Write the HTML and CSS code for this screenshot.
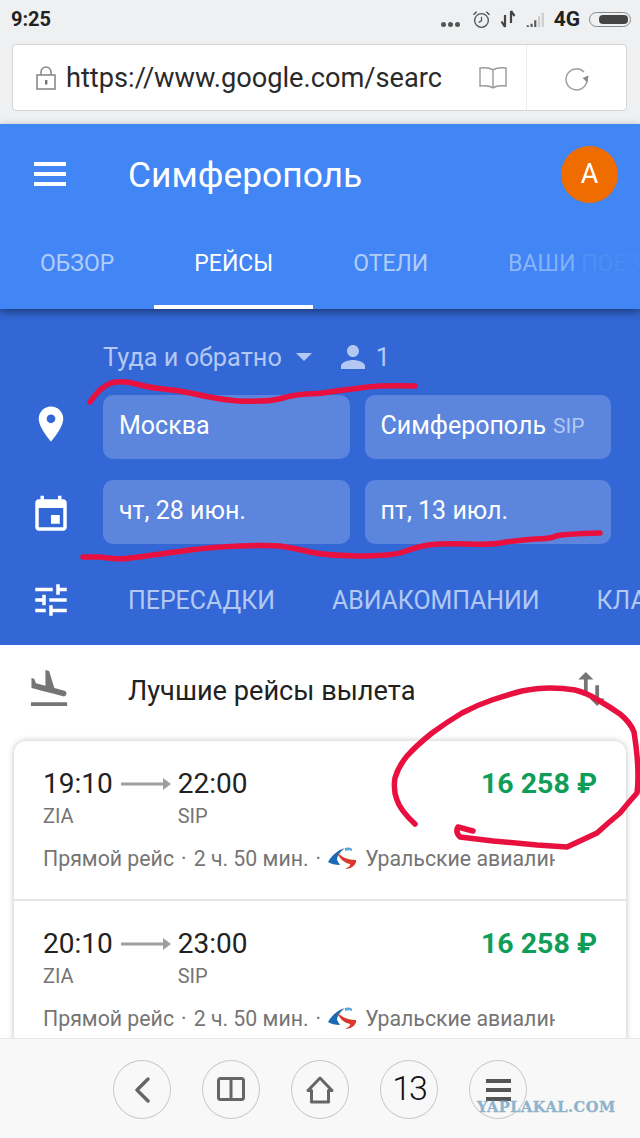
FILE: index.html
```html
<!DOCTYPE html>
<html lang="ru">
<head>
  <meta charset="UTF-8" />
  <meta name="viewport" content="width=device-width, initial-scale=1.0"/>
  <title>Симферополь</title>
  <link rel="stylesheet" href="styles.css">
</head>
<body>
  <div class="status-bar">
    <span class="clock">9:25</span>
    <div class="status-icons">
      <span class="status-dots"><i></i><i></i><i></i></span>
      <svg class="alarm-icon" viewBox="0 0 20 20" width="19" height="19"><circle cx="10" cy="11" r="7.200" fill="none" stroke="#555" stroke-width="1.400"/><path d="M10 7v4.400l-3 1.600" fill="none" stroke="#555" stroke-width="1.300"/><path d="M1.500 5L5 1.800M18.500 5L15 1.800" stroke="#555" stroke-width="1.600"/></svg>
      <svg class="data-icon" viewBox="0 0 16 20" width="16" height="20"><path d="M5 18V6M1.500 12.500L5 18M11 2v12M11 2l3.500 5" fill="none" stroke="#444" stroke-width="2.200"/></svg>
      <svg class="signal-icon" viewBox="0 0 21 18" width="21" height="15"><path d="M0 16h2.500v2H0zM4.500 14H7v4H4.500zM9 10h2.500v8H9z" fill="#555"/><path d="M13.500 5H16v13h-2.500zM18 1h2.500v17H18z" fill="#ccc"/></svg>
      <span class="net-label">4G</span>
      <span class="battery"><span class="battery-level"></span></span>
    </div>
  </div>

  <div class="browser-bar">
    <div class="url-box">
      <svg class="lock-icon" viewBox="0 0 20 24" width="20" height="24"><rect x="1" y="9" width="18" height="14" fill="none" stroke="#8a8a8a" stroke-width="1.600"/><path d="M5 9V6a5 5 0 0 1 10 0v3" fill="none" stroke="#8a8a8a" stroke-width="1.600"/><rect x="9" y="14" width="2.400" height="4.500" fill="#777"/></svg>
      <span class="url-text">https://www.google.com/searc</span>
      <svg class="reader-icon" viewBox="0 0 28 24" width="28" height="24"><path d="M14 4C11 2 6 1.500 1 2v18c5-.5 10 0 13 2 3-2 8-2.500 13-2V2c-5-.5-10 0-13 2zM14 4v18" fill="none" stroke="#9a9a9a" stroke-width="1.400"/></svg>
      <div class="url-reload">
        <svg viewBox="0 0 26 26" width="26" height="26"><path d="M20 7A10.500 10.500 0 1 0 23 15" fill="none" stroke="#a0a0a0" stroke-width="1.500"/><path d="M24.500 10.500l-1 7-5-4.500z" fill="#8a8a8a"/></svg>
      </div>
    </div>
  </div>

  <div class="app-bar">
    <div class="title-row">
      <div class="menu-btn"><i></i><i></i><i></i></div>
      <span class="page-title">Симферополь</span>
      <span class="avatar">A</span>
    </div>
    <div class="tabs">
      <span class="tab">ОБЗОР</span>
      <span class="tab active">РЕЙСЫ</span>
      <span class="tab">ОТЕЛИ</span>
      <span class="tab fade">ВАШИ ПОЕЗДКИ</span>
    </div>
  </div>

  <div class="search-panel">
    <div class="trip-row">
      <span class="trip-type">Туда и обратно</span>
      <svg class="trip-caret" viewBox="7 10 10 5" width="16" height="8"><path d="M7 10l5 5 5-5z"/></svg>
      <svg class="person-icon" viewBox="4 4 16 16" width="24" height="24"><path d="M12 12c2.210 0 4-1.790 4-4s-1.790-4-4-4-4 1.790-4 4 1.790 4 4 4zm0 2c-2.670 0-8 1.340-8 4v2h16v-2c0-2.660-5.330-4-8-4z"/></svg>
      <span class="trip-count">1</span>
    </div>
    <div class="field-row">
      <svg class="field-icon pin-icon" viewBox="0 0 24 24" width="42" height="42"><path d="M12 2C8.130 2 5 5.130 5 9c0 5.250 7 13 7 13s7-7.750 7-13c0-3.870-3.130-7-7-7zm0 9.500c-1.380 0-2.500-1.120-2.500-2.500s1.120-2.500 2.500-2.500 2.500 1.120 2.500 2.500-1.120 2.500-2.500 2.500z"/></svg>
      <div class="field">Москва</div>
      <div class="field">Симферополь <small>SIP</small></div>
    </div>
    <div class="field-row">
      <svg class="field-icon date-icon" viewBox="0 0 24 24" width="42" height="42"><path d="M17 12h-5v5h5v-5zM16 1v2H8V1H6v2H5c-1.110 0-1.990.9-1.990 2L3 19c0 1.100.89 2 2 2h14c1.100 0 2-.9 2-2V5c0-1.100-.9-2-2-2h-1V1h-2zm3 18H5V8h14v11z"/></svg>
      <div class="field">чт, 28 июн.</div>
      <div class="field">пт, 13 июл.</div>
    </div>
    <div class="filter-row">
      <svg class="field-icon" viewBox="0 0 24 24" width="42" height="42"><path d="M3 17v2h6v-2H3zM3 5v2h10V5H3zm10 16v-2h8v-2h-8v-2h-2v6h2zM7 9v2H3v2h4v2h2V9H7zm14 4v-2H11v2h10zm-6-4h2V7h4V5h-4V3h-2v6z"/></svg>
      <span class="filter">ПЕРЕСАДКИ</span>
      <span class="filter">АВИАКОМПАНИИ</span>
      <span class="filter">КЛАСС</span>
    </div>
  </div>

  <div class="results">
    <div class="results-head">
      <svg class="land-icon" viewBox="2 2 20 20" width="38" height="38"><path d="M2.500 19h19v2h-19zm7.180-5.730l4.350 1.160 5.310 1.420c.8.21 1.620-.26 1.840-1.060.21-.8-.26-1.620-1.060-1.840l-5.310-1.420-2.760-9.020L10.120 2v8.280L5.150 8.950l-.93-2.320-1.450-.39v5.170l1.600.43 5.310 1.430z"/></svg>
      <span class="results-title">Лучшие рейсы вылета</span>
      <svg class="swap-icon" viewBox="5 3 14 18" width="27" height="34"><path d="M16 17.010V10h-2v7.010h-3L15 21l4-3.990h-3zM9 3L5 6.990h3V14h2V6.990h3L9 3z"/></svg>
    </div>

    <div class="flights-card">
      <div class="flight">
        <div class="flight-top">
          <div class="flight-point">
            <span class="flight-time">19:10</span>
            <span class="flight-code">ZIA</span>
          </div>
          <svg class="flight-arrow" viewBox="0 0 50 12" width="50" height="12"><path d="M0 6h42" stroke="#9e9e9e" stroke-width="3"/><path d="M42 0l8 6-8 6z" fill="#9e9e9e"/></svg>
          <div class="flight-point">
            <span class="flight-time">22:00</span>
            <span class="flight-code">SIP</span>
          </div>
          <span class="flight-price">16 258 ₽</span>
        </div>
        <div class="flight-info">
          <span>Прямой рейс</span><span class="sep">·</span><span>2 ч. 50 мин.</span><span class="sep">·</span>
          <svg class="airline-logo" viewBox="0 0 29 23" width="29" height="23"><path d="M0 15C4 8 10 3 17 1 12 5 9 9 9 13l3 5c-5 0-9-1-12-3z" fill="#1b6ab5"/><path d="M17 1c3-1 8-1 7 3-2-1-4-1-7 0z" fill="#5aa7e0"/><path d="M9 5c4 5 11 8 19 8 1 4-4 9-11 9 4-2 6-4 5-5C16 16 11 11 9 5z" fill="#d9392c"/></svg>
          <span class="airline-name">Уральские авиалинии</span>
        </div>
      </div>
      <div class="flight">
        <div class="flight-top">
          <div class="flight-point">
            <span class="flight-time">20:10</span>
            <span class="flight-code">ZIA</span>
          </div>
          <svg class="flight-arrow" viewBox="0 0 50 12" width="50" height="12"><path d="M0 6h42" stroke="#9e9e9e" stroke-width="3"/><path d="M42 0l8 6-8 6z" fill="#9e9e9e"/></svg>
          <div class="flight-point">
            <span class="flight-time">23:00</span>
            <span class="flight-code">SIP</span>
          </div>
          <span class="flight-price">16 258 ₽</span>
        </div>
        <div class="flight-info">
          <span>Прямой рейс</span><span class="sep">·</span><span>2 ч. 50 мин.</span><span class="sep">·</span>
          <svg class="airline-logo" viewBox="0 0 29 23" width="29" height="23"><path d="M0 15C4 8 10 3 17 1 12 5 9 9 9 13l3 5c-5 0-9-1-12-3z" fill="#1b6ab5"/><path d="M17 1c3-1 8-1 7 3-2-1-4-1-7 0z" fill="#5aa7e0"/><path d="M9 5c4 5 11 8 19 8 1 4-4 9-11 9 4-2 6-4 5-5C16 16 11 11 9 5z" fill="#d9392c"/></svg>
          <span class="airline-name">Уральские авиалинии</span>
        </div>
      </div>
    </div>
  </div>

  <div class="bottom-bar">
    <button class="nav-btn"><svg viewBox="0 0 16 26" width="16" height="26"><path d="M14 2L3 13l11 11" fill="none" stroke="#666" stroke-width="3.400" stroke-linecap="round" stroke-linejoin="round"/></svg></button>
    <button class="nav-btn"><svg viewBox="0 0 28 25" width="28" height="25"><path d="M3.500 1.500h21a2 2 0 0 1 2 2v17a2 2 0 0 1-2 2h-21a2 2 0 0 1-2-2v-17a2 2 0 0 1 2-2zM14 1.500V24" fill="none" stroke="#666" stroke-width="3"/></svg></button>
    <button class="nav-btn"><svg viewBox="0 0 28 28" width="28" height="28"><path d="M14 2L2 14.500h3.500v11.500h17V14.500H26z" fill="none" stroke="#666" stroke-width="3" stroke-linejoin="round"/></svg></button>
    <button class="nav-btn tab-count">13</button>
    <button class="nav-btn"><span class="nav-lines"><i></i><i></i><i></i></span></button>
  </div>

  <span class="watermark">YAPLAKAL.COM</span>

  <!-- red marker notes drawn over the page -->
  <svg class="marker-layer" viewBox="0 0 640 1138" width="640" height="1138">
    <path d="M90 402Q100 387 111 383Q123 380 136 384Q150 388 163 389Q177 390 195 394Q213 398 228 400Q243 402 258 401Q273 401 283 398Q293 395 306 394Q320 394 336 391Q353 389 368 387Q383 385 415 386"/>
    <path d="M83 557L100 557Q120 560 130 558Q140 557 153 555Q167 553 190 550Q213 547 240 546Q267 545 280 546Q293 548 306 551Q320 555 356 556Q393 556 403 552Q413 548 428 545Q443 543 468 544Q493 545 506 542Q520 540 535 539Q550 539 556 536Q563 534 600 533"/>
    <path d="M415 824Q400 810 397 800Q393 790 395 778Q398 767 407 756Q417 745 432 733Q447 722 462 713Q477 705 492 700Q507 695 522 691Q537 688 550 688Q563 688 575 690Q587 693 598 700Q610 707 620 714Q630 722 634 732Q640 770 637 793Q628 803 620 813Q608 823 597 833Q582 840 567 847Q552 846 537 845Q515 843 493 841Q476 839 460 837Q455 832 458 827L473 831"/>
  </svg>
</body>
</html>
```

FILE: styles.css
```css
* {
  box-sizing: border-box;
}

body {
  margin: 0;
  width: 640px;
  height: 100vh;
  overflow: hidden;
  display: flex;
  flex-direction: column;
  position: relative;
  font-family: Roboto, "Noto Sans", sans-serif;
  background: #fff;
  color: #212121;
}

/* phone status bar */
.status-bar {
  height: 44px;
  flex: none;
  display: flex;
  align-items: center;
  justify-content: space-between;
  padding: 0 9px 6px 11px;
  background: #eff0f2;
}

.clock {
  font-size: 20px;
  font-weight: 700;
  color: #222;
}

.status-icons {
  display: flex;
  align-items: center;
}

.status-dots {
  display: flex;
  gap: 2px;
  margin-top: 10px;
  margin-right: 12px;
}

.status-dots i {
  width: 5px;
  height: 5px;
  border-radius: 50%;
  background: #555;
}

.alarm-icon {
  margin-right: 9px;
}

.data-icon {
  margin-right: 9px;
}

.signal-icon {
  margin-right: 8px;
}

.net-label {
  font-size: 21px;
  font-weight: 700;
  color: #222;
  margin-right: 9px;
}

.battery {
  width: 42px;
  height: 15px;
  padding: 2px 2px 2px 9px;
  border: 1px solid #888;
  border-radius: 8px;
}

.battery-level {
  display: block;
  height: 100%;
  border-radius: 4px;
  background: #444;
}

/* browser address bar */
.browser-bar {
  height: 80px;
  flex: none;
  padding: 0 13px 13px 12px;
  background: #eff0f2;
}

.url-box {
  height: 67px;
  display: flex;
  align-items: center;
  padding-left: 23px;
  background: #fff;
  border: 1px solid #d4d4d4;
  border-radius: 4px;
}

.lock-icon {
  flex: none;
}

.url-text {
  margin-left: 10px;
  width: 413px;
  flex: none;
  font-size: 27.2px;
  color: #2a2a2a;
  white-space: nowrap;
}

.reader-icon {
  flex: none;
}

.url-reload {
  flex: 1;
  height: 100%;
  margin-left: 19px;
  display: flex;
  align-items: center;
  justify-content: center;
  border-left: 1px solid #ececec;
}

/* blue header */
.app-bar {
  height: 185px;
  flex: none;
  position: relative;
  z-index: 1;
  background: #4285f4;
  color: #fff;
  box-shadow: 0 3px 8px rgba(0, 0, 0, 0.45);
}

.title-row {
  height: 100px;
  display: flex;
  align-items: center;
  padding: 0 22px 0 34px;
}

.menu-btn {
  width: 32px;
  display: flex;
  flex-direction: column;
  gap: 6px;
}

.menu-btn i {
  height: 4px;
  background: #fff;
}

.page-title {
  flex: 1;
  margin-left: 62px;
  padding-top: 1px;
  font-size: 35.4px;
}

.avatar {
  width: 57px;
  height: 57px;
  display: flex;
  align-items: center;
  justify-content: center;
  border-radius: 50%;
  background: #ef6c00;
  font-size: 27px;
}

.tabs {
  height: 85px;
  display: flex;
  white-space: nowrap;
  overflow: hidden;
}

.tab {
  height: 85px;
  padding: 26px 40px 0;
  flex: none;
  font-size: 23px;
  color: rgba(255, 255, 255, 0.6);
}

.tab.active {
  color: #fff;
  border-bottom: 4px solid #fff;
}

.tab.fade {
  -webkit-mask-image: linear-gradient(to right, rgba(0, 0, 0, 0.7) 40px, rgba(0, 0, 0, 0.55) 105px, rgba(0, 0, 0, 0.15) 115px, rgba(0, 0, 0, 0.05) 172px);
  mask-image: linear-gradient(to right, rgba(0, 0, 0, 0.7) 40px, rgba(0, 0, 0, 0.55) 105px, rgba(0, 0, 0, 0.15) 115px, rgba(0, 0, 0, 0.05) 172px);
}

/* search form */
.search-panel {
  height: 336px;
  flex: none;
  padding-top: 27px;
  background: #3367d6;
  color: #fff;
}

.trip-row {
  height: 42px;
  display: flex;
  align-items: center;
  padding-left: 103px;
  margin-bottom: 17px;
  color: #b3c8f2;
  font-size: 25.3px;
}

.trip-caret {
  margin-left: 14px;
  fill: #b3c8f2;
}

.person-icon {
  margin-left: 29px;
  fill: #b3c8f2;
}

.trip-count {
  margin-left: 11px;
}

.field-row {
  height: 64px;
  display: flex;
  align-items: center;
  gap: 15px;
  padding: 0 29px 0 30px;
  margin-bottom: 21px;
}

.field-row:last-of-type {
  margin-bottom: 0;
}

.field-icon {
  flex: none;
  fill: #fff;
}

.field-row .field-icon {
  margin-right: 16px;
}

.pin-icon {
  margin-bottom: 6px;
}

.date-icon {
  margin-top: 6px;
}

.field {
  flex: 1;
  height: 100%;
  display: flex;
  align-items: center;
  gap: 7px;
  padding: 0 0 3px 16px;
  border-radius: 10px;
  background: #5c85dd;
  font-size: 25px;
}

.field small {
  font-size: 21px;
  color: #b3c8f2;
}

.filter-row {
  display: flex;
  align-items: center;
  gap: 57px;
  height: 42px;
  padding-left: 30px;
  margin-top: 35px;
  overflow: hidden;
  white-space: nowrap;
  color: #b3c8f2;
  font-size: 24.9px;
}

.filter-row .field-icon {
  margin-right: -1px;
}

/* results list */
.results {
  flex: 1;
  min-height: 0;
  overflow: hidden;
  padding: 0 14px;
  background: #fff;
}

.results-head {
  height: 96px;
  display: flex;
  align-items: center;
  padding: 0 21px 8px 16px;
}

.land-icon {
  flex: none;
  fill: #757575;
}

.results-title {
  flex: 1;
  margin: 4px 0 0 60px;
  font-size: 27.2px;
  color: #212121;
}

.swap-icon {
  fill: #757575;
}

.flights-card {
  background: #fff;
  border-radius: 12px 12px 0 0;
  box-shadow: 0 0 6px rgba(0, 0, 0, 0.25);
}

.flight {
  height: 160px;
  padding: 25px 29px 0;
  border-bottom: 2px solid #e4e4e4;
}

.flight-top {
  display: flex;
  align-items: flex-start;
}

.flight-point {
  display: flex;
  flex-direction: column;
}

.flight-time {
  font-size: 28px;
  line-height: 36px;
  color: #212121;
}

.flight-code {
  font-size: 20px;
  line-height: 30px;
  margin-top: -1px;
  color: #757575;
}

.flight-arrow {
  margin: 12px 7px 0 8px;
}

.flight-price {
  margin-left: auto;
  font-size: 28.5px;
  line-height: 36px;
  font-weight: 700;
  color: #0f9d58;
}

.flight-info {
  display: flex;
  align-items: center;
  margin-top: 15px;
  width: 512px;
  overflow: hidden;
  white-space: nowrap;
  font-size: 21.3px;
  color: #757575;
}

.flight-info .sep {
  margin: 0 7px;
}

.airline-logo {
  flex: none;
  margin-right: 8px;
}

/* browser toolbar */
.bottom-bar {
  height: 100px;
  flex: none;
  position: relative;
  display: flex;
  align-items: flex-start;
  justify-content: center;
  gap: 31px;
  padding-top: 21px;
  background: #f8f8f8;
  border-top: 1px solid #e6e6e6;
}

.nav-btn {
  width: 58px;
  height: 59px;
  padding: 0;
  display: flex;
  align-items: center;
  justify-content: center;
  background: none;
  border: 1px solid #c8c8c8;
  border-radius: 50%;
  font-family: inherit;
}

.tab-count {
  padding-bottom: 4px;
  font-size: 34px;
  font-weight: 300;
  letter-spacing: -2px;
  color: #111;
}

.nav-lines {
  width: 25px;
  display: flex;
  flex-direction: column;
  gap: 5px;
}

.nav-lines i {
  height: 4px;
  background: #555;
}

.watermark {
  position: absolute;
  left: 477px;
  top: 1098px;
  font-family: "DejaVu Serif", serif;
  font-size: 14.6px;
  font-weight: 700;
  letter-spacing: 0.5px;
  color: #8fb3cc;
  -webkit-text-stroke: 0.3px #8fb3cc;
}

.marker-layer {
  position: absolute;
  left: 0;
  top: 0;
  pointer-events: none;
}

.marker-layer path {
  fill: none;
  stroke: #e8103f;
  stroke-width: 5.5;
  stroke-linecap: round;
  stroke-linejoin: round;
}
```
